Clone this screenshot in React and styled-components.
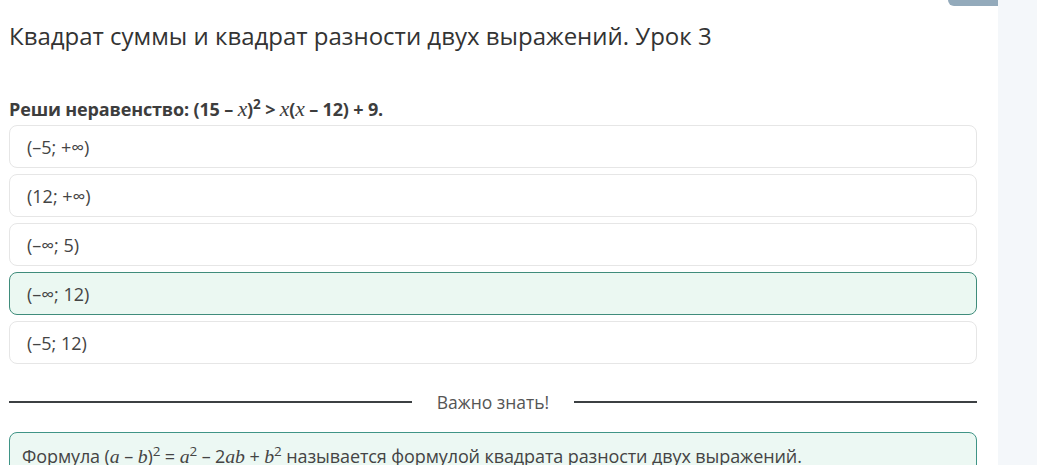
import React from "react";
import styled, { createGlobalStyle } from "styled-components";

const Global = createGlobalStyle`
  html, body { margin: 0; padding: 0; }
  body {
    background: #f4f7fa;
    font-family: "Open Sans", "Noto Sans", sans-serif;
    color: #333;
  }
`;

const Page = styled.div`
  display: flex;
  height: 465px;
  overflow: hidden;
`;

const Main = styled.main`
  width: 998px;
  flex: none;
  background: #ffffff;
  box-shadow: 1px 0 2px rgba(0, 0, 0, 0.04);
  padding: 0 21px 0 9px;
  box-sizing: border-box;
  display: flex;
  flex-direction: column;
`;

const Side = styled.aside`
  flex: 1;
  background: #f4f7fa;
`;

const TopBar = styled.div`
  display: flex;
  justify-content: flex-end;
  height: 6px;
  margin-right: -21px;
`;

const Tab = styled.div`
  width: 50px;
  height: 6px;
  background: #93aabb;
  border-bottom-left-radius: 6px;
`;

const Title = styled.h1`
  margin: 14px 0 0;
  font-size: 24px;
  line-height: 32px;
  font-weight: 400;
  color: #333;
`;

const Question = styled.div`
  margin-top: 45px;
  font-size: 18px;
  line-height: 24px;
  font-weight: 700;
  color: #3d3d3d;
  letter-spacing: -0.15px;
`;

const M = styled.span`
  font-family: "Liberation Serif", "DejaVu Serif", serif;
  font-style: italic;
  font-weight: 400;
  font-size: ${(p) => p.$size || "1.1em"};
`;

const Sup = styled.sup`
  font-size: 0.75em;
  line-height: 0;
  vertical-align: 0.55em;
`;

const Options = styled.div`
  display: flex;
  flex-direction: column;
  gap: 6px;
  margin-top: 4px;
`;

const Option = styled.div`
  height: 43px;
  box-sizing: border-box;
  display: flex;
  align-items: center;
  padding: 0 17px;
  border: 1px solid ${(p) => (p.$selected ? "#3f8c7b" : "#e6e6e6")};
  background: ${(p) => (p.$selected ? "#ebf8f2" : "#ffffff")};
  border-radius: 8px;
  font-size: 18px;
  color: #444;
`;

const Divider = styled.div`
  display: flex;
  align-items: center;
  margin-top: 26px;
  height: 24px;
`;

const Line = styled.div`
  flex: 1;
  height: 2px;
  background: #3c4043;
`;

const DividerText = styled.span`
  margin: 0 25px;
  font-size: 17.5px;
  color: #555;
`;

const Info = styled.div`
  margin-top: 18px;
  border: 1px solid #3f9486;
  border-radius: 8px;
  background: #ecf8f3;
  padding: 11px 12px;
  font-size: 18px;
  line-height: 24px;
  color: #444;
  white-space: nowrap;
  letter-spacing: -0.1px;
`;

const list = [
  { text: "(–5; +\u221E)", selected: false },
  { text: "(12; +\u221E)", selected: false },
  { text: "(–\u221E; 5)", selected: false },
  { text: "(–\u221E; 12)", selected: true },
  { text: "(–5; 12)", selected: false },
];

export default function App() {
  return (
    <>
      <Global />
      <Page>
        <Main>
          <TopBar>
            <Tab />
          </TopBar>
          <Title>Квадрат суммы и квадрат разности двух выражений. Урок 3</Title>
          <Question>
            Реши неравенство: (15 – <M $size="1.2em">x</M>)<Sup>2</Sup> &gt; <M $size="1.2em">x</M>(
            <M $size="1.2em">x</M> – 12) + 9.
          </Question>
          <Options>
            {list.map((o, i) => (
              <Option key={i} $selected={o.selected}>
                {o.text}
              </Option>
            ))}
          </Options>
          <Divider>
            <Line />
            <DividerText>Важно знать!</DividerText>
            <Line />
          </Divider>
          <Info>
            Формула (<M>a</M> – <M>b</M>)<Sup>2</Sup> = <M>a</M><Sup>2</Sup> – 2<M>ab</M> + <M>b</M>
            <Sup>2</Sup> называется формулой квадрата разности двух выражений.
          </Info>
        </Main>
        <Side />
      </Page>
    </>
  );
}
